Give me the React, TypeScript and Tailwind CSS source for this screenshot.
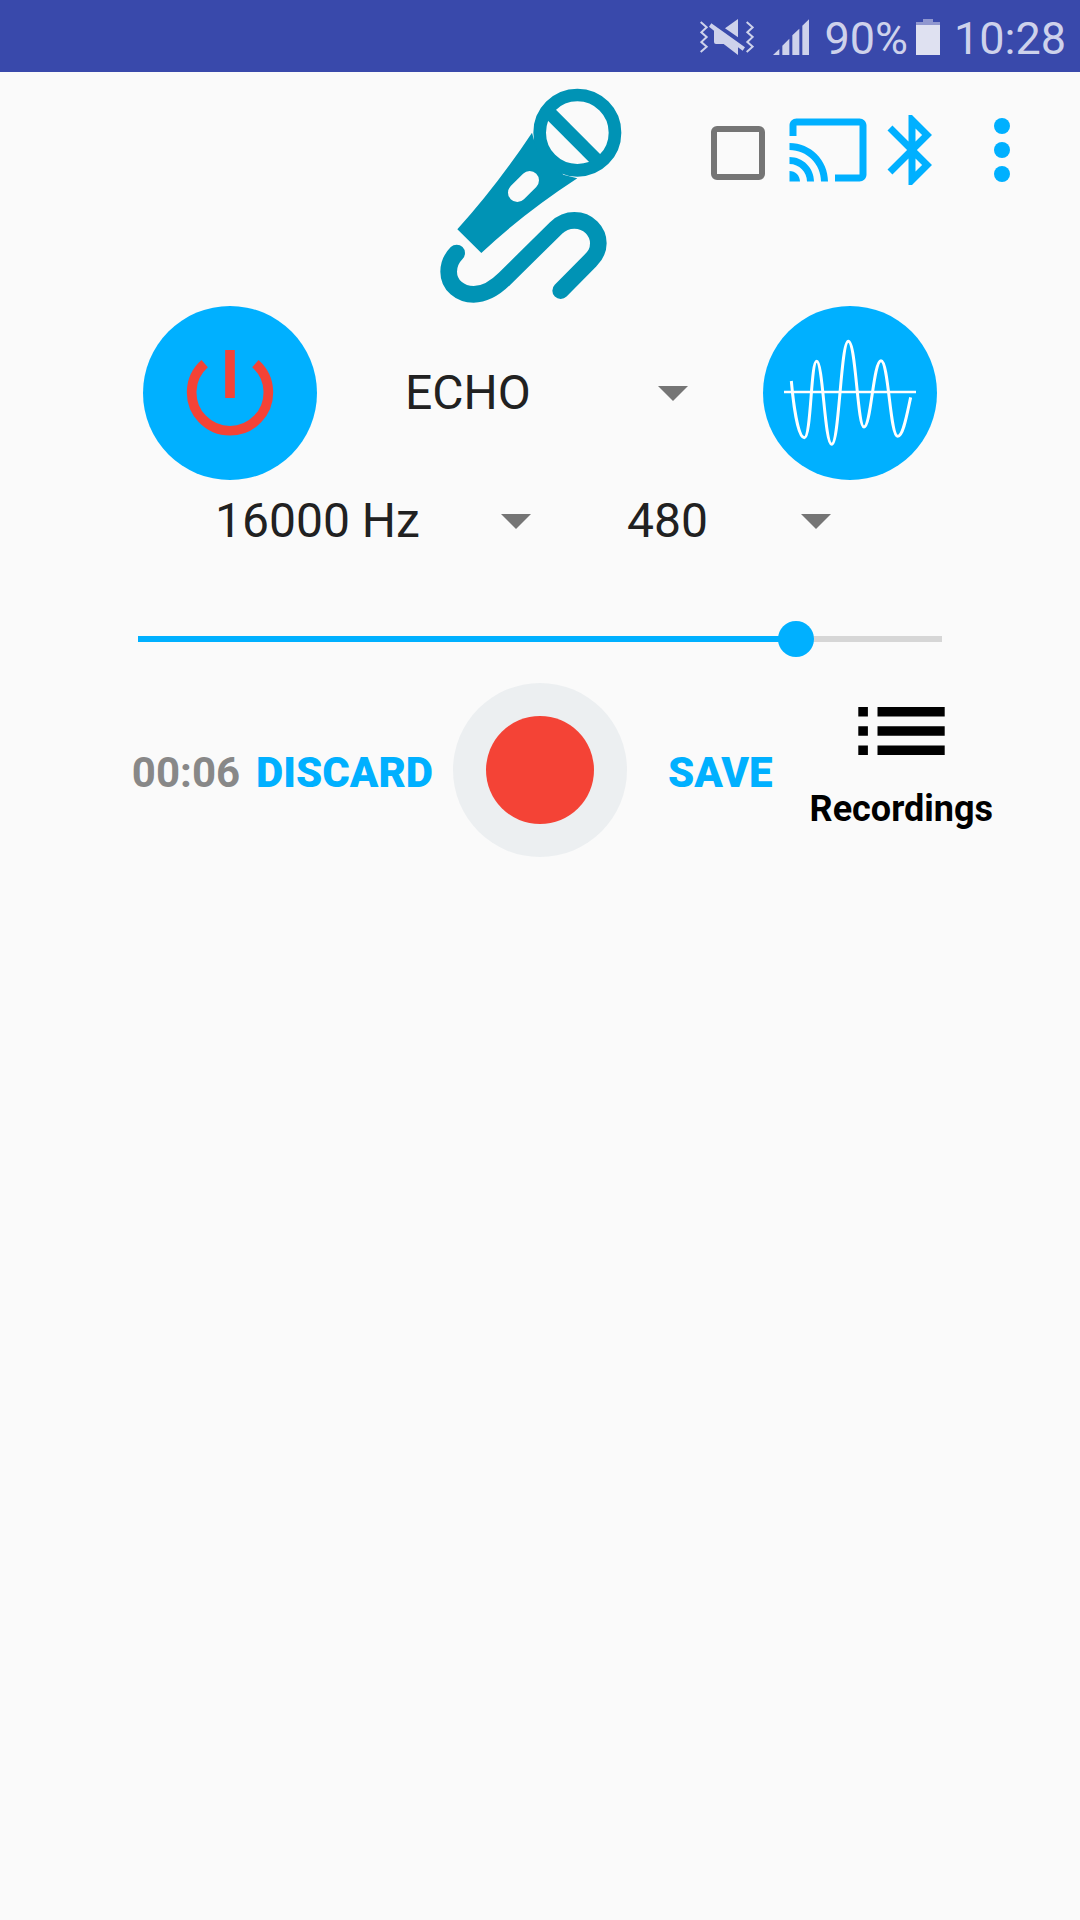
import { useState } from "react";
import type { ReactNode } from "react";

function StatusBar() {
  return (
    <div className="flex h-[72px] items-end justify-end bg-[#3949ab] pr-3.5 pb-[17px] text-[45px] leading-[33px] text-[#ced2eb]">
      <svg className="mr-[19px] h-9 w-[54px]" viewBox="60 57 162 108" fill="currentColor" aria-label="Vibrate">
        <g fill="none" stroke="currentColor" strokeWidth="6">
          <path d="M62 66 L80 82 L64 97 L80 111 L64 126 L80 140 L62 156" />
          <path d="M200 66 L218 82 L202 97 L218 111 L202 126 L218 140 L200 156" />
        </g>
        <path d="M174 57 V112 L135 85 Z" />
        <path d="M94 70 L195 142 L188 152 L174 142 V165 L131 132 H108 Q102 132 102 126 V92 L87 80 Z" />
      </svg>
      <svg className="mr-[15px] h-9 w-9" viewBox="0 0 108 108" fill="currentColor" aria-label="Signal">
        <path d="M0 108 L19 90 V108 Z M28 80 L49 59 V108 H28 Z M58 49 L79 29 V108 H58 Z M88 20 L109 0 V108 H88 Z" />
      </svg>
      <span>90%</span>
      <svg className="mr-3.5 ml-2 h-9 w-6" viewBox="0 0 24 36" aria-label="Battery">
        <path d="M7 0 H17 V3 H24 V7 H0 V3 H7 Z" fill="#9097cf" />
        <path d="M0 6 H24 V36 H0 Z" fill="#dfe1f1" />
      </svg>
      <span>10:28</span>
    </div>
  );
}

function Microphone() {
  return (
    <svg className="h-[234px] w-[216px]" viewBox="36 6 648 702" fill="none" stroke="#0093b5" aria-label="Microphone">
      <path
        d="M336 188 Q230 348 112 478 L184 549 Q308 432 472 325 L430 314 L342 210 Z"
        fill="#0093b5"
        stroke="none"
      />
      <circle cx="472" cy="188" r="113" strokeWidth="38" />
      <path d="M387 127 L538 278" strokeWidth="40" />
      <path d="M292 368 L329 331" stroke="#fafafa" strokeWidth="56" strokeLinecap="round" />
      <path
        d="M110 549 C92 567 86 585 86 605 C86 645 120 673 161 673 C195 673 230 650 255 625 L408 474 C424 459 441 451 463 451 C505 451 535 484 535 520 C535 545 525 558 511 572 L422 662"
        strokeWidth="50"
        strokeLinecap="round"
      />
    </svg>
  );
}

function Spinner({
  label,
  options,
  className,
}: {
  label: string;
  options: string[];
  className?: string;
}) {
  const [value, setValue] = useState(options[0]);

  return (
    <div className={`grid items-center ${className ?? ""}`}>
      <select
        aria-label={label}
        value={value}
        onChange={(e) => setValue(e.target.value)}
        className="col-start-1 row-start-1 w-full appearance-none bg-transparent text-[48px] leading-[56px] text-[#212121] outline-none"
      >
        {options.map((o) => (
          <option key={o}>{o}</option>
        ))}
      </select>
      <svg
        className="pointer-events-none col-start-1 row-start-1 h-[15px] w-[30px] justify-self-end"
        viewBox="0 0 30 15"
        fill="#757575"
      >
        <path d="M0 0 H30 L15 15 Z" />
      </svg>
    </div>
  );
}

function RoundButton({ label, children }: { label: string; children: ReactNode }) {
  return (
    <button type="button" aria-label={label} className="size-[174px] shrink-0 rounded-full bg-[#00b0ff]">
      <svg className="size-full" viewBox="39 17 522 522" fill="none">
        {children}
      </svg>
    </button>
  );
}

function Toolbar() {
  return (
    <div className="mt-[30px] flex items-center justify-end self-start pr-[30px] text-[#00b0ff]">
      <input
        type="checkbox"
        aria-label="Enable"
        className="mt-1.5 mr-[21px] size-[54px] shrink-0 appearance-none rounded-[6px] border-6 border-[#757575] checked:bg-[#757575]"
      />
      <button type="button" aria-label="Cast">
        <svg className="size-[84px]" viewBox="0 0 24 24" fill="currentColor">
          <path d="M21 3H3c-1.1 0-2 .9-2 2v3h2V5h18v14h-7v2h7c1.1 0 2-.9 2-2V5c0-1.1-.9-2-2-2zM1 18v3h3c0-1.66-1.34-3-3-3zm0-4v2c2.76 0 5 2.24 5 5h2c0-3.87-3.13-7-7-7zm0-4v2c4.97 0 9 4.03 9 9h2c0-6.08-4.93-11-11-11z" />
        </svg>
      </button>
      <button type="button" aria-label="Bluetooth">
        <svg className="size-[84px]" viewBox="0 0 24 24" fill="currentColor">
          <path d="M17.71 7.71L12 2h-1v7.59L6.41 5 5 6.41 10.59 12 5 17.59 6.41 19 11 14.41V22h1l5.71-5.71-4.3-4.29 4.3-4.29zM13 5.83l1.88 1.88L13 9.59V5.83zm1.88 10.46L13 18.17v-3.76l1.88 1.88z" />
        </svg>
      </button>
      <button type="button" aria-label="More options">
        <svg className="size-24" viewBox="0 0 24 24" fill="currentColor">
          <circle cx="12" cy="6" r="2" />
          <circle cx="12" cy="12" r="2" />
          <circle cx="12" cy="18" r="2" />
        </svg>
      </button>
    </div>
  );
}

function VolumeSlider() {
  const max = 30;
  const [volume, setVolume] = useState(25);
  const percent = (volume / max) * 100;

  return (
    <input
      type="range"
      aria-label="Volume"
      min={0}
      max={max}
      value={volume}
      onChange={(e) => setVolume(Number(e.target.value))}
      style={{
        backgroundImage: `linear-gradient(to right, #00b0ff ${percent}%, #d6d6d6 ${percent}%)`,
      }}
      className="block h-9 w-full appearance-none bg-[length:100%_6px] bg-center bg-no-repeat outline-none [&::-webkit-slider-thumb]:size-9 [&::-webkit-slider-thumb]:appearance-none [&::-webkit-slider-thumb]:rounded-full [&::-webkit-slider-thumb]:bg-[#00b0ff]"
    />
  );
}

export default function App() {
  return (
    <div className="min-h-screen bg-[#fafafa] font-[Roboto,sans-serif]">
      <StatusBar />

      <header className="grid grid-cols-[1fr_216px_1fr]">
        <div className="col-start-2">
          <Microphone />
        </div>
        <Toolbar />
      </header>

      <main>
        <div className="mx-auto w-full max-w-[794px]">
          <div className="flex items-center">
            <RoundButton label="Power">
              <path d="M224 190 A115 115 0 1 0 376 190" stroke="#f44336" strokeWidth="29" />
              <path d="M300 149 V293" stroke="#f44336" strokeWidth="29" />
            </RoundButton>
            <Spinner label="Effect" options={["ECHO", "REVERB", "NONE"]} className="mr-[75px] ml-[88px] flex-1" />
            <RoundButton label="Waveform">
              <path d="M102 275 H498" stroke="white" strokeWidth="8" />
              <path
                d="M124 242 C130 310 144 412 163 412 C184 412 182 183 200 183 C219 183 224 432 245 432 C268 432 272 123 295 123 C318 123 322 380 342 380 C363 380 370 181 393 181 C416 181 420 408 443 408 C460 408 471 340 482 291"
                stroke="white"
                strokeWidth="9"
              />
            </RoundButton>
          </div>

          <div className="mt-[13px] grid grid-cols-[316fr_204fr] gap-24 pr-[106px] pl-[72px]">
            <Spinner label="Sample rate" options={["16000 Hz", "44100 Hz", "48000 Hz"]} />
            <Spinner label="Buffer size" options={["480", "960"]} />
          </div>
        </div>

        <div className="mx-auto mt-[72px] w-full max-w-[804px]">
          <VolumeSlider />
        </div>

        <div className="mt-[26px] grid grid-cols-[1fr_174px_1fr] items-center text-[42px] font-bold">
          <div className="flex justify-end gap-4 pt-1 pr-5">
            <span className="text-[#888888]">00:06</span>
            <button type="button" className="font-black text-[#00b0ff]">
              DISCARD
            </button>
          </div>
          <button
            type="button"
            aria-label="Record"
            className="flex size-[174px] items-center justify-center rounded-full bg-[#eceff1]"
          >
            <span className="size-[108px] rounded-full bg-[#f44336]" />
          </button>
          <div className="flex items-center gap-[37px] pl-[41px]">
            <button type="button" className="pt-1 font-black text-[#00b0ff]">
              SAVE
            </button>
            <button
              type="button"
              className="flex flex-col items-center gap-[33px] pb-[3px] text-[36px] leading-[42px] text-black"
            >
              <svg className="h-12 w-[87px]" viewBox="3 7 18 10" fill="currentColor">
                <path d="M3 7h2v2H3zM7 7h14v2H7zM3 11h2v2H3zM7 11h14v2H7zM3 15h2v2H3zM7 15h14v2H7z" />
              </svg>
              Recordings
            </button>
          </div>
        </div>
      </main>
    </div>
  );
}
